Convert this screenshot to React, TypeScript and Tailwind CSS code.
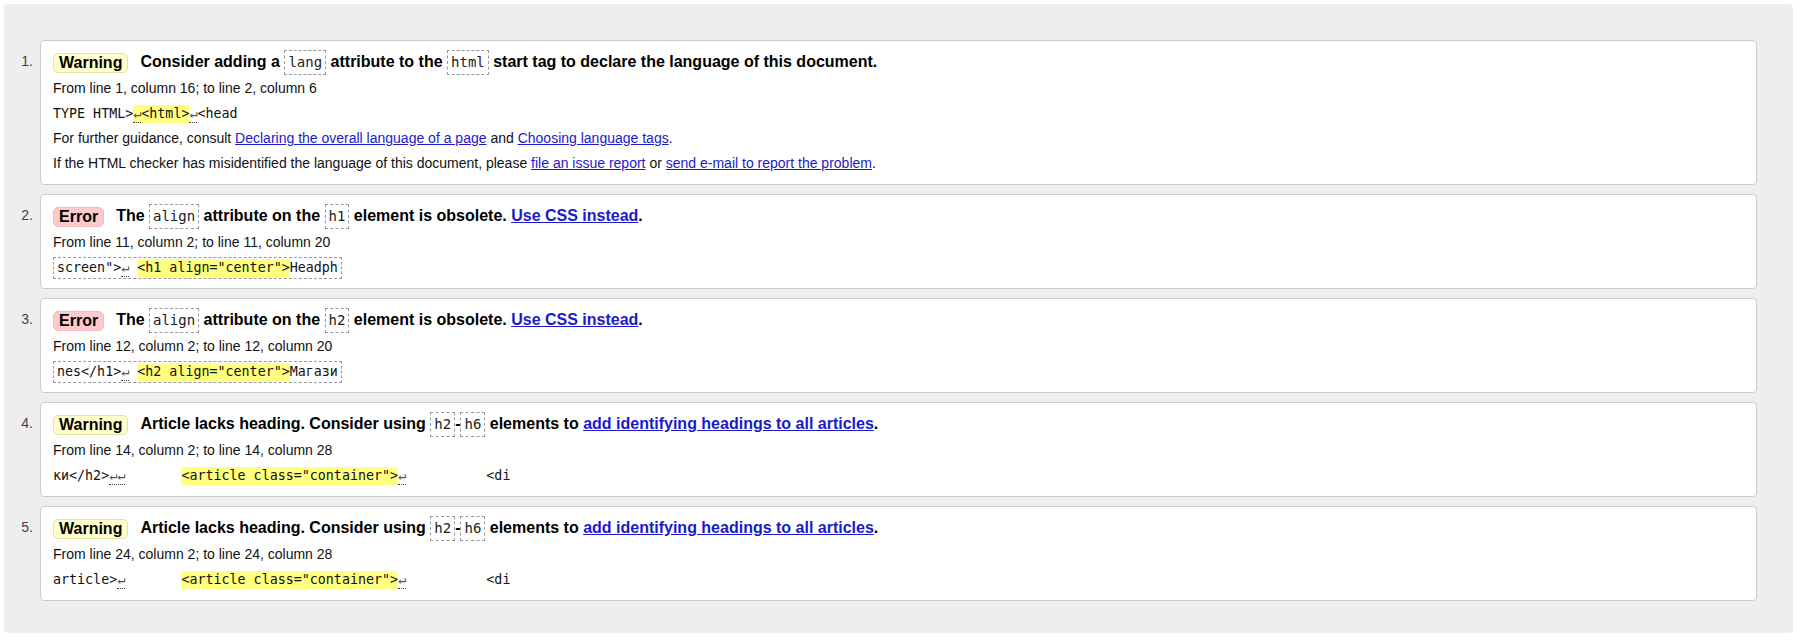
import type { ReactNode } from "react";

// Nu HTML checker style message list

const LINK = "text-[#1a1acc] underline";

function Code({ children }: { children: ReactNode }) {
  return (
    <code className="inline-block align-middle border border-dashed border-[#999] px-[3px] leading-[23px] text-[14px] font-normal text-[#222] font-['DejaVu_Sans_Mono',monospace]">
      {children}
    </code>
  );
}

function Nl({ n = 1 }: { n?: number }) {
  return (
    <span className="inline-block leading-[16px] border-b border-dotted border-[#444] text-[#555]">
      {"↵".repeat(n)}
    </span>
  );
}

function Hl({ children }: { children: ReactNode }) {
  return <span className="inline-block leading-[18px] bg-[#ffff80]">{children}</span>;
}

function Badge({ kind }: { kind: "Warning" | "Error" }) {
  const cls =
    kind === "Warning"
      ? "bg-[#ffffcc] border-[#e2e2a8]"
      : "bg-[#fccaca] border-[#f3bcbc]";
  return (
    <strong className={`inline-block align-middle border rounded-[5px] px-[5px] leading-[18px] ${cls}`}>
      {kind}
    </strong>
  );
}

type Msg = {
  kind: "Warning" | "Error";
  text: ReactNode;
  loc: string;
  extract: ReactNode;
  boxed?: boolean;
  more?: ReactNode[];
};

const articleMsg = (
  <>
    Article lacks heading. Consider using <Code>h2</Code>-<Code>h6</Code> elements to{" "}
    <a className={LINK}>add identifying headings to all articles</a>.
  </>
);

const MESSAGES: Msg[] = [
  {
    kind: "Warning",
    text: (
      <>
        Consider adding a <Code>lang</Code> attribute to the <Code>html</Code> start tag to declare the
        language of this document.
      </>
    ),
    loc: "From line 1, column 16; to line 2, column 6",
    extract: (
      <>
        TYPE HTML&gt;
        <Hl>
          <Nl />
          &lt;html&gt;
        </Hl>
        <Nl />
        &lt;head
      </>
    ),
    more: [
      <>
        For further guidance, consult <a className={LINK}>Declaring the overall language of a page</a> and{" "}
        <a className={LINK}>Choosing language tags</a>.
      </>,
      <>
        If the HTML checker has misidentified the language of this document, please{" "}
        <a className={LINK}>file an issue report</a> or <a className={LINK}>send e-mail to report the problem</a>.
      </>,
    ],
  },
  {
    kind: "Error",
    text: (
      <>
        The <Code>align</Code> attribute on the <Code>h1</Code> element is obsolete.{" "}
        <a className={LINK}>Use CSS instead</a>.
      </>
    ),
    loc: "From line 11, column 2; to line 11, column 20",
    boxed: true,
    extract: (
      <>
        screen"&gt;
        <Nl /> <Hl>&lt;h1 align="center"&gt;</Hl>Headph
      </>
    ),
  },
  {
    kind: "Error",
    text: (
      <>
        The <Code>align</Code> attribute on the <Code>h2</Code> element is obsolete.{" "}
        <a className={LINK}>Use CSS instead</a>.
      </>
    ),
    loc: "From line 12, column 2; to line 12, column 20",
    boxed: true,
    extract: (
      <>
        nes&lt;/h1&gt;
        <Nl /> <Hl>&lt;h2 align="center"&gt;</Hl>Магази
      </>
    ),
  },
  {
    kind: "Warning",
    text: articleMsg,
    loc: "From line 14, column 2; to line 14, column 28",
    extract: (
      <>
        ки&lt;/h2&gt;
        <Nl n={2} />
        {"       "}
        <Hl>&lt;article class="container"&gt;</Hl>
        <Nl />
        {"          "}&lt;di
      </>
    ),
  },
  {
    kind: "Warning",
    text: articleMsg,
    loc: "From line 24, column 2; to line 24, column 28",
    extract: (
      <>
        article&gt;
        <Nl />
        {"       "}
        <Hl>&lt;article class="container"&gt;</Hl>
        <Nl />
        {"          "}&lt;di
      </>
    ),
  },
];

export default function App() {
  return (
    <div className="min-h-screen w-[1805px] bg-white p-[4px] font-['Liberation_Sans',Arial,sans-serif] text-black">
      <div className="w-[1789px] rounded-[4px] bg-[#eeeeee] pt-[36px] pb-[32px] pr-[36px]">
        <ol className="flex flex-col gap-[9px]">
          {MESSAGES.map((m, i) => (
            <li key={i} className="flex">
              <span className="w-[36px] shrink-0 pt-[10px] pr-[7px] text-right text-[14px] leading-[22px] text-[#444]">
                {i + 1}.
              </span>
              <div className="flex-1 rounded-[4px] border border-[#cccccc] bg-white pl-3 pt-[9px] pb-[8px]">
                <p className="h-[22px] whitespace-nowrap text-[16px] font-bold leading-[22px]">
                  <Badge kind={m.kind} />
                  <span className="ml-3 align-middle">{m.text}</span>
                </p>
                <p className="mt-[4px] text-[14px] leading-[25px] text-[#111]">{m.loc}</p>
                <div className="flex h-[25px] items-center">
                  <code
                    className={`whitespace-pre text-[13.33px] leading-[18px] text-[#111] font-['DejaVu_Sans_Mono',monospace] ${
                      m.boxed ? "border border-dashed border-[#999] px-[3px] py-[1px]" : ""
                    }`}
                  >
                    {m.extract}
                  </code>
                </div>
                {m.more?.map((p, j) => (
                  <p key={j} className="text-[14px] leading-[25px] text-[#111]">
                    {p}
                  </p>
                ))}
              </div>
            </li>
          ))}
        </ol>
      </div>
    </div>
  );
}
